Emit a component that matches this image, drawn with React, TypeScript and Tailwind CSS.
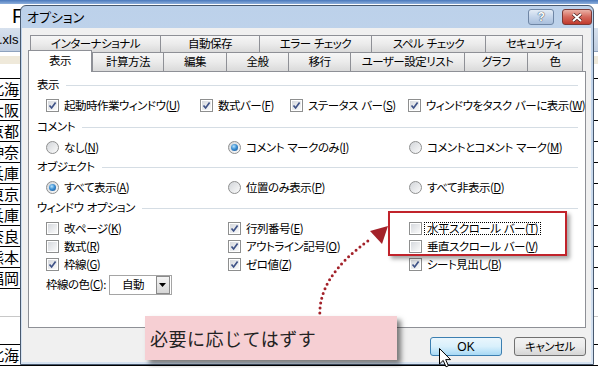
import React from 'react';

type Opt = { label: string; k: string; on?: boolean; focus?: boolean };

const jp = "font-['Noto_Sans_CJK_JP',sans-serif]";

// palt squeezes the ordinary space; use a slightly wider one like Meiryo UI
const sp = (s: string) => s.replace(/ /g, '\u2004');

function CheckBox({ on }: { on?: boolean }) {
    return (
        <span className="relative block h-[13px] w-[13px] shrink-0 border border-[#8e8f8f] bg-white">
            <span className="absolute inset-[1px] bg-gradient-to-br from-[#d6d9de] to-[#fafafa]" />
            {on && (
                <svg className="absolute left-0 top-0" width="11" height="11" viewBox="0 0 11 11">
                    <path d="M2.5 5.5 L4.6 8 L8.6 2.6" fill="none" stroke="#3e5287" strokeWidth="1.7" />
                </svg>
            )}
        </span>
    );
}

function Radio({ on }: { on?: boolean }) {
    return (
        <span className="relative flex h-[13px] w-[13px] shrink-0 items-center justify-center rounded-full border border-[#8e8f8f] bg-gradient-to-br from-[#d2d5d9] to-[#fbfbfb]">
            {on && (
                <span className="h-[7px] w-[7px] rounded-full bg-[radial-gradient(circle_at_40%_35%,#b9e3fb_0%,#3b8fd3_45%,#164d8c_100%)]" />
            )}
        </span>
    );
}

function Label({ o }: { o: Opt }) {
    return (
        <span
            className={
                o.focus
                    ? '-ml-[3px] whitespace-nowrap border border-dotted border-black px-[2px] leading-[11px]'
                    : 'whitespace-nowrap leading-[12px]'
            }
        >
            {sp(o.label)}(<span className="underline underline-offset-[1px]">{o.k}</span>)
        </span>
    );
}

function Item({ o, radio }: { o: Opt; radio?: boolean }) {
    return (
        <div className="flex items-center gap-[5px]">
            {radio ? <Radio on={o.on} /> : <CheckBox on={o.on} />}
            <Label o={o} />
        </div>
    );
}

function Group({ title, mt = '' }: { title: string; mt?: string }) {
    return (
        <div className={`flex h-[20px] items-center pl-[8px] pr-[7px] ${mt}`}>
            <span className="whitespace-nowrap">{sp(title)}</span>
            <span className="ml-[7px] h-px flex-1 bg-[#d5dde4]" />
        </div>
    );
}

const cells = ['北海', '大阪', '京都', '神奈', '兵庫', '東京', '兵庫', '奈良', '熊本', '福岡'];

function Sheet() {
    return (
        <div className="absolute inset-0 flex flex-col bg-white font-['Noto_Sans_CJK_JP',sans-serif] text-black">
            <div className="h-[4px] bg-gradient-to-b from-[#4a78bb] to-[#8fb0dc]" />
            <div className="relative h-[24px]">
                <span className="absolute left-[12px] top-0 font-['Liberation_Sans',sans-serif] text-[20px] leading-[24px]">F</span>
            </div>
            <div className="flex h-[24px] items-center border-b border-[#8ea2bd] bg-gradient-to-b from-[#d7e1ee] to-[#bfcde0] font-['Liberation_Sans',sans-serif] text-[13px]">
                <span className="-ml-[1px]">.xls</span>
            </div>
            <div className="h-[4px]" />
            <div className="h-[8px] bg-[#efe9da]" />
            <div className="h-[15px] border-b border-black" />
            {cells.map((c, i) => (
                <div key={i} className="flex h-[21px] items-center border-b border-black text-[15px]">
                    <span className="-ml-[11px]">{c}</span>
                </div>
            ))}
            <div className="h-[28px] border-b border-[#c8c8c8]" />
            <div className="h-[28px] border-b border-black" />
            <div className="flex h-[21px] items-center border-b border-black text-[15px]">
                <span className="-ml-[11px]">北海</span>
            </div>
        </div>
    );
}

const tabsBack = [
    { t: 'インターナショナル', w: 'w-[130px]' },
    { t: '自動保存', w: 'w-[99px]' },
    { t: 'エラー チェック', w: 'w-[112px]' },
    { t: 'スペル チェック', w: 'w-[114px]' },
    { t: 'セキュリティ', w: 'w-[98px]' },
];

const tabsFront = [
    { t: '計算方法', w: 'w-[71px]' },
    { t: '編集', w: 'w-[63px]' },
    { t: '全般', w: 'w-[62px]' },
    { t: '移行', w: 'w-[62px]' },
    { t: 'ユーザー設定リスト', w: 'w-[114px]' },
    { t: 'グラフ', w: 'w-[63px]' },
    { t: '色', w: 'w-[56px]' },
];

const tabCls =
    'flex items-center justify-center whitespace-nowrap border-l border-t border-[#8e9096] bg-gradient-to-b from-[#f6f6f6] via-[#ebebeb] to-[#dadada]';

const row1: (Opt & { w?: string })[] = [
    { label: '起動時作業ウィンドウ', k: 'U', on: true, w: 'w-[154px]' },
    { label: '数式バー', k: 'F', on: true, w: 'w-[90px]' },
    { label: 'ステータス バー', k: 'S', on: true, w: 'w-[118px]' },
    { label: 'ウィンドウをタスク バーに表示', k: 'W', on: true },
];

const comments: Opt[] = [
    { label: 'なし', k: 'N' },
    { label: 'コメント マークのみ', k: 'I', on: true },
    { label: 'コメントとコメント マーク', k: 'M' },
];

const objects: Opt[] = [
    { label: 'すべて表示', k: 'A', on: true },
    { label: '位置のみ表示', k: 'P' },
    { label: 'すべて非表示', k: 'D' },
];

const windowOpts: Opt[][] = [
    [
        { label: '改ページ', k: 'K' },
        { label: '行列番号', k: 'E', on: true },
        { label: '水平スクロール バー', k: 'T', focus: true },
    ],
    [
        { label: '数式', k: 'R' },
        { label: 'アウトライン記号', k: 'O', on: true },
        { label: '垂直スクロール バー', k: 'V' },
    ],
    [
        { label: '枠線', k: 'G', on: true },
        { label: 'ゼロ値', k: 'Z', on: true },
        { label: 'シート見出し', k: 'B', on: true },
    ],
];

function ThreeCols({ opts, radio, h }: { opts: Opt[]; radio?: boolean; h: string }) {
    return (
        <div className={`flex items-center pl-[17px] ${h}`}>
            {opts.map((o, i) => (
                <div key={i} className={i === 0 ? 'w-[182px] shrink-0' : i === 1 ? 'w-[181px] shrink-0' : ''}>
                    <Item o={o} radio={radio} />
                </div>
            ))}
        </div>
    );
}

export default function App() {
    return (
        <div className={`relative h-[368px] w-[598px] overflow-hidden text-black ${jp}`}>
            <Sheet />

            {/* Dialog window */}
            <div className="absolute left-[20px] top-[5px] flex h-[360px] w-[574px] flex-col rounded-t-[6px] border border-[#48596f] bg-gradient-to-b from-[#bcd1ea] to-[#d5e2f1] text-[11.5px] tracking-[-0.5px] [font-feature-settings:'palt']">
                {/* Title bar */}
                <div className="flex h-[22px] shrink-0 items-start justify-between">
                    <span className="pl-[6px] pt-[3px] text-[13px] leading-[16px] tracking-normal">オプション</span>
                    <div className="flex gap-[8px] pr-[1px] pt-[3px]">
                        <div className="flex h-[16px] w-[26px] items-center justify-center rounded-[3px] border border-[#6f86a5] bg-gradient-to-b from-[#e4ecf6] via-[#c3d4ea] to-[#a9bfdc] font-['Liberation_Sans',sans-serif] text-[12px] font-bold leading-none text-white [text-shadow:0_0_1px_#2b3d55,0_0_1px_#2b3d55]">
                            ?
                        </div>
                        <div className="flex h-[16px] w-[30px] items-center justify-center rounded-[3px] border border-[#7a3a36] bg-gradient-to-b from-[#e9b0a6] via-[#d4675b] to-[#c0392d]">
                            <svg width="12" height="9" viewBox="0 0 12 9">
                                <path d="M2 1 L10 8 M10 1 L2 8" stroke="#4a2220" strokeWidth="3.4" />
                                <path d="M2 1 L10 8 M10 1 L2 8" stroke="#ffffff" strokeWidth="2" />
                            </svg>
                        </div>
                    </div>
                </div>

                {/* Body */}
                <div className="mb-[2px] ml-[1px] mr-[2px] flex flex-1 flex-col bg-[#f0f0f0]">
                    {/* Back tab row */}
                    <div className="ml-[8px] mt-[7px] flex h-[17px]">
                        {tabsBack.map((t, i) => (
                            <div key={i} className={`${tabCls} ${t.w} ${i === tabsBack.length - 1 ? 'border-r' : ''}`}>
                                {sp(t.t)}
                            </div>
                        ))}
                    </div>
                    {/* Front tab row */}
                    <div className="ml-[6px] flex h-[19px] items-start">
                        <div className="relative z-10 -mt-[2px] flex h-[22px] w-[64px] items-center justify-center border-x border-t border-[#8e9096] bg-white pb-[2px]">
                            表示
                        </div>
                        {tabsFront.map((t, i) => (
                            <div key={i} className={`${tabCls} h-[19px] ${t.w} ${i === tabsFront.length - 1 ? 'border-r' : ''}`}>
                                {t.t}
                            </div>
                        ))}
                    </div>

                    {/* Panel */}
                    <div className="ml-[6px] flex h-[257px] w-[558px] flex-col border border-[#8e9096] bg-white pt-[3px]">
                        <Group title="表示" />
                        <div className="flex h-[20px] items-center pl-[17px]">
                            {row1.map((o, i) => (
                                <div key={i} className={o.w ? `${o.w} shrink-0` : ''}>
                                    <Item o={o} />
                                </div>
                            ))}
                        </div>
                        <Group title="コメント" mt="mt-[2px]" />
                        <ThreeCols opts={comments} radio h="h-[20px]" />
                        <Group title="オブジェクト" />
                        <ThreeCols opts={objects} radio h="h-[20px]" />
                        <Group title="ウィンドウ オプション" mt="mt-[1px]" />
                        <div className="mt-[1px] flex flex-col">
                            {windowOpts.map((r, i) => (
                                <ThreeCols key={i} opts={r} h="h-[18px]" />
                            ))}
                        </div>
                        <div className="mt-[1px] flex h-[22px] items-center gap-[3px] pl-[17px]">
                            <span className="whitespace-nowrap">
                                枠線の色(<span className="underline underline-offset-[1px]">C</span>):
                            </span>
                            <div className="flex h-[20px] w-[63px] items-center border border-[#a5a5a5] bg-white">
                                <span className="flex-1 text-center">自動</span>
                                <span className="mr-[1px] flex h-[18px] w-[14px] items-center justify-center border border-[#8a8a8a] bg-gradient-to-b from-[#f4f4f4] to-[#d6d6d6]">
                                    <svg width="7" height="4" viewBox="0 0 7 4">
                                        <path d="M0 0 H7 L3.5 4 Z" fill="#000" />
                                    </svg>
                                </span>
                            </div>
                        </div>
                    </div>

                    {/* Buttons */}
                    <div className="mt-[9px] flex justify-end gap-[12px] pr-[5px]">
                        <button className="flex h-[19px] w-[72px] items-center justify-center rounded-[3px] border border-[#3c7fb1] bg-gradient-to-b from-[#eaf6fd] via-[#d9f0fc] to-[#a7d9f5] font-['Liberation_Sans',sans-serif] text-[12px] tracking-normal text-black">
                            OK
                        </button>
                        <button className="flex h-[19px] w-[72px] items-center justify-center rounded-[3px] border border-[#707070] bg-gradient-to-b from-[#f2f2f2] via-[#ebebeb] to-[#d5d5d5] text-black">
                            キャンセル
                        </button>
                    </div>
                </div>
            </div>

            {/* Highlight box */}
            <div className="absolute left-[388px] top-[211px] h-[45px] w-[179px] border-2 border-[#c1232b] shadow-[3px_3px_4px_rgba(0,0,0,0.35)]" />

            {/* Dotted arrow */}
            <svg className="absolute left-0 top-0" width="598" height="368" viewBox="0 0 598 368">
                <path
                    d="M320 318 C 318 292, 332 266, 372 238"
                    fill="none"
                    stroke="#a3222a"
                    strokeWidth="3"
                    strokeLinecap="round"
                    strokeDasharray="0 5"
                />
                <path d="M388 226 L370 231 L382 244 Z" fill="#a3222a" />
            </svg>

            {/* Callout */}
            <div className="absolute left-[145px] top-[316px] flex h-[44px] w-[252px] items-center bg-[#f6cfd3] pl-[5px] text-[18px] tracking-[0.5px] text-[#222] shadow-[4px_4px_5px_rgba(0,0,0,0.5)]">
                必要に応じてはずす
            </div>

            {/* Mouse cursor */}
            <svg className="absolute left-[439px] top-[348px]" width="13" height="20" viewBox="0 0 13 20">
                <path d="M0.5 0.5 L0.5 16 L4.2 12.4 L7 18.8 L9.4 17.8 L6.7 11.6 L11.5 11.6 Z" fill="#fff" stroke="#000" strokeWidth="1" />
            </svg>
        </div>
    );
}
